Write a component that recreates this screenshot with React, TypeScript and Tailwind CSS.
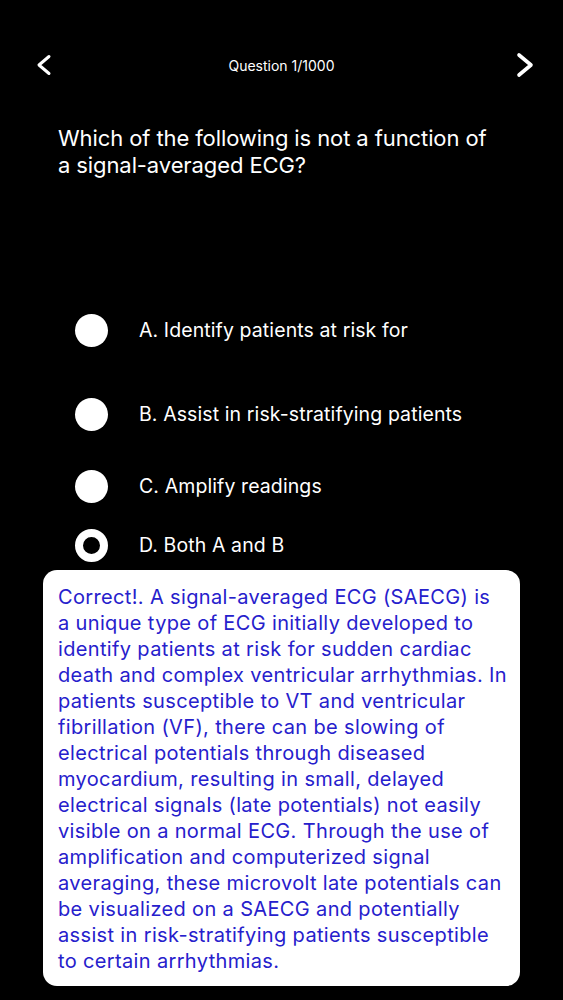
import React from 'react';

const explanation = [
  'Correct!. A signal-averaged ECG (SAECG) is',
  'a unique type of ECG initially developed to',
  'identify patients at risk for sudden cardiac',
  'death and complex ventricular arrhythmias. In',
  'patients susceptible to VT and ventricular',
  'fibrillation (VF), there can be slowing of',
  'electrical potentials through diseased',
  'myocardium, resulting in small, delayed',
  'electrical signals (late potentials) not easily',
  'visible on a normal ECG. Through the use of',
  'amplification and computerized signal',
  'averaging, these microvolt late potentials can',
  'be visualized on a SAECG and potentially',
  'assist in risk-stratifying patients susceptible',
  'to certain arrhythmias.',
];

function Option({ label, selected, className }: { label: string; selected?: boolean; className: string }) {
  return (
    <div className={`flex h-[34px] items-center ${className}`}>
      {selected ? (
        <div className="ml-[75px] h-[33px] w-[33px] rounded-full border-[8px] border-white bg-black" />
      ) : (
        <div className="ml-[75px] h-[33px] w-[33px] rounded-full bg-white" />
      )}
      <span className="ml-[31px] text-[19.5px] leading-[24px] tracking-[0.1px] text-white">{label}</span>
    </div>
  );
}

export default function App() {
  return (
    <div className="min-h-[1000px] w-full bg-black font-['Inter','Noto_Sans',sans-serif]">
      <div className="box-content grid h-[30px] grid-cols-[1fr_auto_1fr] items-center pt-[50px]">
        <div className="pl-[36px]">
          <svg width="16" height="22" viewBox="0 0 16 22" fill="none">
            <polyline points="13,2.5 3,11 13,19.5" stroke="white" strokeWidth="3" strokeLinecap="round" strokeLinejoin="round" />
          </svg>
        </div>
        <span className="text-[14px] text-white">Question 1/1000</span>
        <div className="flex justify-end pr-[29px]">
          <svg width="18" height="26" viewBox="0 0 18 26" fill="none">
            <polyline points="3,3 15,13 3,23" stroke="white" strokeWidth="3.6" strokeLinecap="round" strokeLinejoin="round" />
          </svg>
        </div>
      </div>

      <h1 className="mt-[45px] pl-[58px] text-[22px] font-normal leading-[27px] tracking-[-0.1px] text-white">
        Which of the following is not a function of
        <br />
        a signal-averaged ECG?
      </h1>

      <Option className="mt-[134px]" label="A. Identify patients at risk for" />
      <Option className="mt-[50px]" label="B. Assist in risk-stratifying patients" />
      <Option className="mt-[38px]" label="C. Amplify readings" />
      <Option className="mt-[25px]" label="D. Both A and B" selected />

      <div className="ml-[43px] mt-[8px] w-[477px] rounded-[14px] bg-white px-[15px] pb-[12px] pt-[14px]">
        {explanation.map((line) => (
          <div key={line} className="whitespace-nowrap text-[20px] leading-[26px] tracking-[0.35px] text-[#2620cc]">
            {line}
          </div>
        ))}
      </div>
    </div>
  );
}
